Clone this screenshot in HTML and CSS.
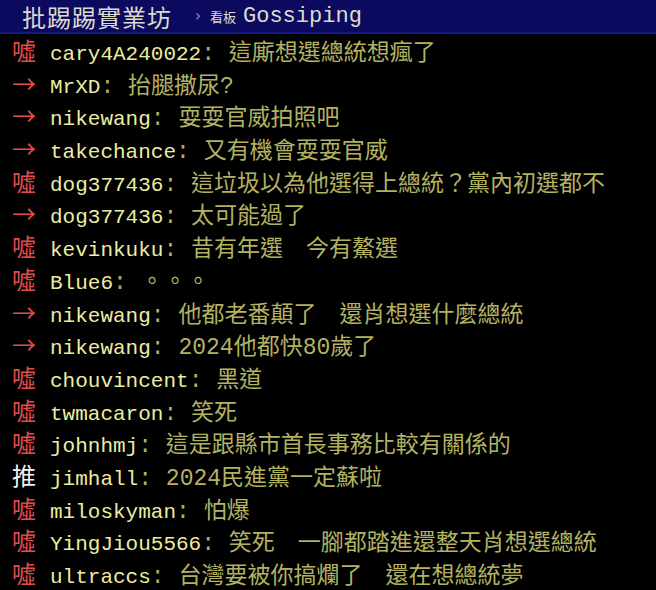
FILE: index.html
```html
<!DOCTYPE html>
<html lang="zh-TW">
<head>
    <meta charset="UTF-8">
    <meta name="viewport" content="width=device-width, initial-scale=1.0">
    <title>批踢踢實業坊 - Gossiping</title>
    <link rel="stylesheet" href="styles.css">
</head>
<body>
    <div class="topbar">
        <span class="site">批踢踢實業坊</span>
        <span class="sep">›</span>
        <span class="board-label">看板</span>
        <span class="board">Gossiping</span>
    </div>

    <div class="pushes">
        <div class="push"><span class="tag boo">噓</span><span class="user">cary4A240022</span><span class="msg">: 這廝想選總統想瘋了</span></div>
        <div class="push"><span class="tag arrow">→</span><span class="user">MrXD</span><span class="msg">: 抬腿撒尿?</span></div>
        <div class="push"><span class="tag arrow">→</span><span class="user">nikewang</span><span class="msg">: 耍耍官威拍照吧</span></div>
        <div class="push"><span class="tag arrow">→</span><span class="user">takechance</span><span class="msg">: 又有機會耍耍官威</span></div>
        <div class="push"><span class="tag boo">噓</span><span class="user">dog377436</span><span class="msg">: 這垃圾以為他選得上總統？黨內初選都不</span></div>
        <div class="push"><span class="tag arrow">→</span><span class="user">dog377436</span><span class="msg">: 太可能過了</span></div>
        <div class="push"><span class="tag boo">噓</span><span class="user">kevinkuku</span><span class="msg">: 昔有年選　今有鰲選</span></div>
        <div class="push"><span class="tag boo">噓</span><span class="user">Blue6</span><span class="msg">: 。。。</span></div>
        <div class="push"><span class="tag arrow">→</span><span class="user">nikewang</span><span class="msg">: 他都老番顛了　還肖想選什麼總統</span></div>
        <div class="push"><span class="tag arrow">→</span><span class="user">nikewang</span><span class="msg">: 2024他都快80歲了</span></div>
        <div class="push"><span class="tag boo">噓</span><span class="user">chouvincent</span><span class="msg">: 黑道</span></div>
        <div class="push"><span class="tag boo">噓</span><span class="user">twmacaron</span><span class="msg">: 笑死</span></div>
        <div class="push"><span class="tag boo">噓</span><span class="user">johnhmj</span><span class="msg">: 這是跟縣市首長事務比較有關係的</span></div>
        <div class="push"><span class="tag up">推</span><span class="user">jimhall</span><span class="msg">: 2024民進黨一定蘇啦</span></div>
        <div class="push"><span class="tag boo">噓</span><span class="user">miloskyman</span><span class="msg">: 怕爆</span></div>
        <div class="push"><span class="tag boo">噓</span><span class="user">YingJiou5566</span><span class="msg">: 笑死　一腳都踏進還整天肖想選總統</span></div>
        <div class="push"><span class="tag boo">噓</span><span class="user">ultraccs</span><span class="msg">: 台灣要被你搞爛了　還在想總統夢</span></div>
    </div>
</body>
</html>
```

FILE: styles.css
```css
body {
    margin: 0;
    background: #000;
    font-family: "Liberation Mono", "Noto Sans CJK TC", monospace;
    overflow: hidden;
}
.topbar {
    height: 32px;
    background: #0c0a5e;
    border-bottom: 2px solid #121a86;
    display: flex;
    align-items: center;
    padding-left: 22px;
    color: #dcdccc;
    white-space: nowrap;
}
.site {
    font-family: "Noto Sans CJK TC", sans-serif;
    font-size: 24px;
    letter-spacing: 1px;
}
.sep {
    font-family: "DejaVu Sans", sans-serif;
    font-size: 15px;
    color: #9a9abd;
    margin-left: 23px;
}
.board-label {
    font-family: "Noto Sans CJK TC", sans-serif;
    font-size: 13px;
    margin-left: 9px;
}
.board {
    font-family: "Liberation Mono", monospace;
    font-size: 22px;
    margin-left: 7px;
}
.push {
    height: 32.7px;
    line-height: 32.7px;
    padding-left: 12px;
    font-size: 21px;
    white-space: nowrap;
}
.tag {
    display: inline-block;
    width: 38px;
    font-family: "Noto Sans CJK TC", sans-serif;
    font-size: 24px;
}
.boo, .arrow { color: #e24b4b; }
.up { color: #f2f2f2; }
.user { color: #ececa0; }
.msg {
    color: #b2b262;
    font-size: 23px;
}
```
